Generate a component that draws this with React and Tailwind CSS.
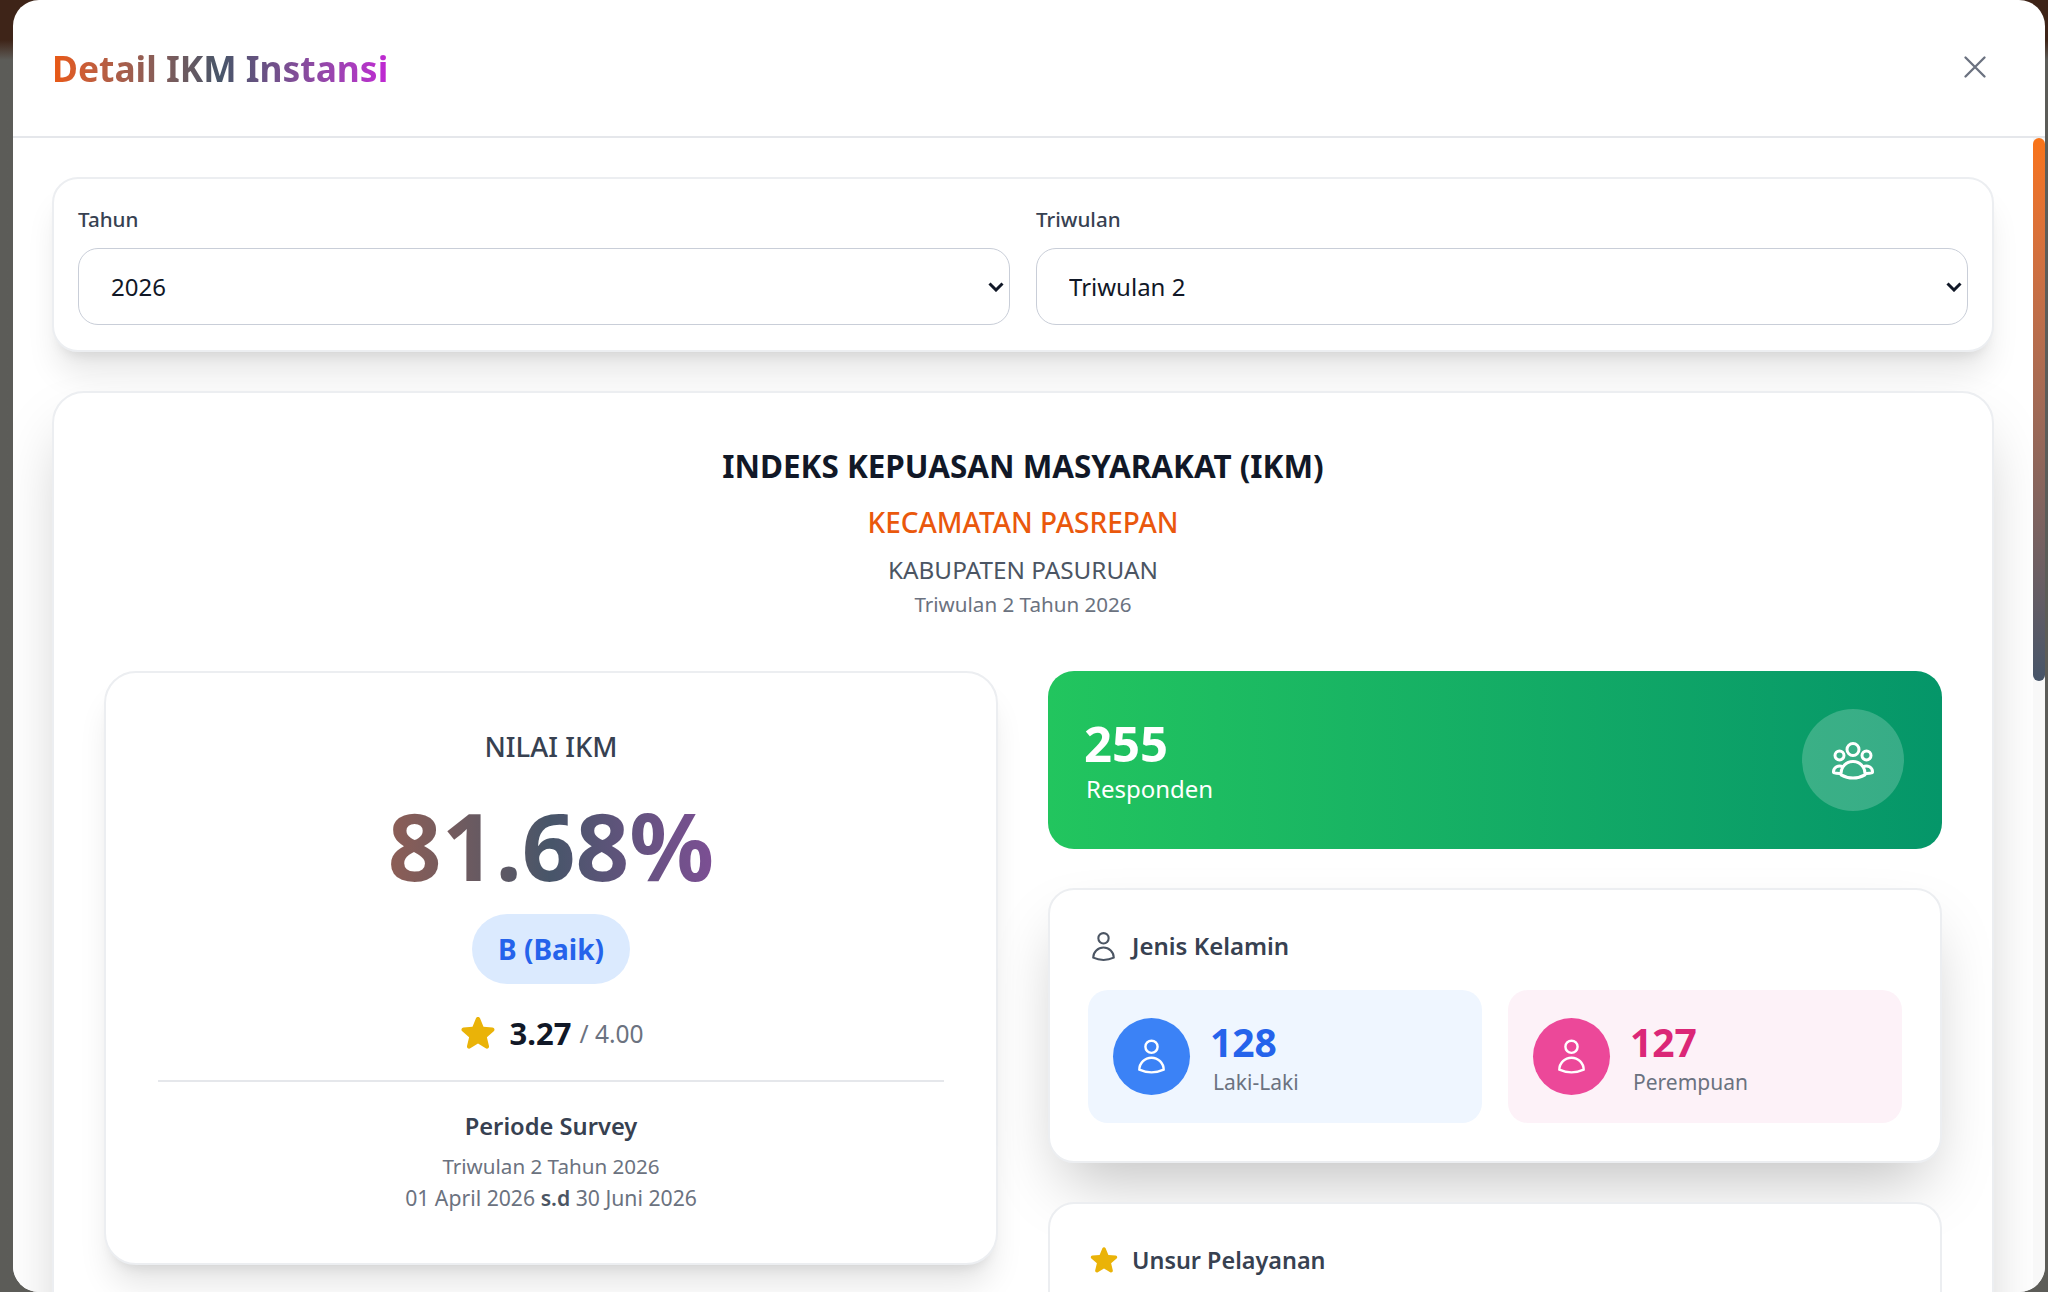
import React from 'react';
import { HiOutlineUser, HiOutlineUserGroup, HiOutlineXMark, HiStar } from 'react-icons/hi2';

function Filter({ label, value, options }) {
  return (
    <div>
      <label className="block text-[20.6px] leading-[26px] font-medium text-[#374151] mb-[16px]">{label}</label>
      <div className="relative">
        <select
          defaultValue={value}
          className="w-full h-[77px] appearance-none pl-[32px] pr-[30px] text-[24px] text-[#111827] bg-white border border-[#c9ced8] rounded-[20px]"
        >
          {options.map(o => <option key={o}>{o}</option>)}
        </select>
        <svg className="absolute right-[6px] top-[34px] w-[16px] h-[10px] pointer-events-none" viewBox="0 0 16 10" fill="none">
          <path d="M1.5 1.5 8 8l6.5-6.5" stroke="#111827" strokeWidth="3" />
        </svg>
      </div>
    </div>
  );
}

function GenderBox({ bg, circle, numColor, value, label }) {
  return (
    <div className={`h-[133px] rounded-[20px] flex items-center pl-[25px] gap-[20px] ${bg}`}>
      <div className={`w-[77px] h-[77px] rounded-full flex items-center justify-center text-white ${circle}`}>
        <HiOutlineUser size={39} />
      </div>
      <div className="pt-[4px]">
        <div className={`text-[39px] leading-[44px] font-bold ${numColor}`}>{value}</div>
        <div className="mt-[3px] text-[21px] leading-[30px] text-[#6b7280] pl-[3px]">{label}</div>
      </div>
    </div>
  );
}

export default function App() {
  return (
    <div className="h-[1292px] overflow-hidden pl-[13px] pr-[3px] bg-gradient-to-b from-[#3e2418] from-[40px] to-[#5c5c58] to-[60px] font-['Noto_Sans',sans-serif]">
      <div className="h-[1292px] bg-white rounded-[26px] overflow-hidden flex flex-col">
        {/* header */}
        <div className="h-[138px] shrink-0 border-b-2 border-[#e5e7eb] flex items-center justify-between pl-[39px] pr-[51px] pt-[2px]">
          <h2 className="text-[35.4px] font-bold bg-gradient-to-r from-[#ea580c] via-[#475569] to-[#c026d3] bg-clip-text text-transparent">Detail IKM Instansi</h2>
          <HiOutlineXMark size={38} className="text-[#6b7280] -mt-[5px]" />
        </div>

        <div className="flex flex-1 min-h-0">
          <div className="flex-1 min-w-0 overflow-hidden p-[39px] bg-white">
            {/* filter */}
            <div className="grid grid-cols-2 gap-[26px] h-[175px] px-[24px] pt-[27px] bg-white border-2 border-[#eceef1] rounded-[26px] shadow-[0_26px_32px_-6px_rgba(0,0,0,0.1),0_10px_13px_-8px_rgba(0,0,0,0.1)]">
              <Filter label="Tahun" value="2026" options={['2026', '2025']} />
              <Filter label="Triwulan" value="Triwulan 2" options={['Triwulan 1', 'Triwulan 2', 'Triwulan 3', 'Triwulan 4']} />
            </div>

            {/* ikm */}
            <div className="mt-[39px] bg-white border-2 border-[#eceef1] rounded-[32px] px-[50px] pt-[50px] pb-[50px] shadow-[0_32px_65px_-16px_rgba(0,0,0,0.25)]">
              <div className="text-center">
                <h3 className="text-[31.4px] leading-[46px] font-bold text-[#111827]">INDEKS KEPUASAN MASYARAKAT (IKM)</h3>
                <div className="mt-[15px] text-[28px] leading-[36px] font-medium text-[#ea580c]">KECAMATAN PASREPAN</div>
                <div className="mt-[12px] text-[24.3px] leading-[36px] text-[#4b5563]">KABUPATEN PASURUAN</div>
                <div className="text-[20.6px] leading-[32px] text-[#6b7280]">Triwulan 2 Tahun 2026</div>
              </div>

              <div className="mt-[51px] grid grid-cols-2 gap-[50px] items-start">
                <div className="h-[594px] border-2 border-[#eceef1] rounded-[32px] bg-white px-[52px] pt-[52px] text-center shadow-[0_26px_32px_-6px_rgba(0,0,0,0.1),0_10px_13px_-8px_rgba(0,0,0,0.1)]">
                  <div className="text-[27.5px] leading-[44px] font-medium text-[#374151]">NILAI IKM</div>
                  <div className="mt-[20px] text-[94px] leading-[112px] font-bold bg-gradient-to-r from-[#ea580c] via-[#475569] to-[#c026d3] bg-clip-text text-transparent">81.68%</div>
                  <div className="mt-[13px] inline-flex h-[70px] items-center px-[26px] rounded-full bg-[#dbeafe] text-[#2563eb] text-[28px] font-bold">B (Baik)</div>
                  <div className="mt-[26px] flex items-center justify-center gap-[8px]">
                    <HiStar size={40} className="text-[#eab308] mr-[3px]" />
                    <span className="text-[31px] font-bold text-[#111827]">3.27</span>
                    <span className="text-[24.5px] text-[#6b7280] mt-[2px]">/ 4.00</span>
                  </div>
                  <div className="mt-[23px] pt-[26px] border-t-2 border-[#e5e7eb]">
                    <div className="text-[23.7px] leading-[36px] font-semibold text-[#374151]">Periode Survey</div>
                    <div className="mt-[6px] text-[20.6px] leading-[32px] text-[#6b7280]">Triwulan 2 Tahun 2026</div>
                    <div className="text-[21.2px] leading-[32px] text-[#6b7280]">01 April 2026 <b className="font-semibold text-[#4b5563]">s.d</b> 30 Juni 2026</div>
                  </div>
                </div>

                <div className="flex flex-col gap-[39px]">
                  <div className="h-[178px] rounded-[26px] bg-gradient-to-r from-[#22c55e] to-[#059669] flex items-center justify-between pl-[36px] pr-[38px] text-white">
                    <div className="pt-[3px]">
                      <div className="text-[49px] leading-[54px] font-bold">255</div>
                      <div className="text-[24px] leading-[37px] pl-[2px]">Responden</div>
                    </div>
                    <div className="w-[102px] h-[102px] rounded-full bg-white/20 flex items-center justify-center">
                      <HiOutlineUserGroup size={48} />
                    </div>
                  </div>

                  <div className="h-[275px] rounded-[26px] border-2 border-[#eceef1] bg-white px-[38px] pt-[38px] shadow-[0_32px_65px_-16px_rgba(0,0,0,0.25)]">
                    <div className="flex items-center gap-[12px] text-[#374151] -ml-[1px]">
                      <HiOutlineUser size={33} className="text-[#4b5563]" />
                      <span className="text-[24px] leading-[36px] font-semibold">Jenis Kelamin</span>
                    </div>
                    <div className="mt-[26px] grid grid-cols-2 gap-[26px]">
                      <GenderBox bg="bg-[#eff6ff]" circle="bg-[#3b82f6]" numColor="text-[#2563eb]" value="128" label="Laki-Laki" />
                      <GenderBox bg="bg-[#fdf2f8]" circle="bg-[#ec4899]" numColor="text-[#db2777]" value="127" label="Perempuan" />
                    </div>
                  </div>

                  <div className="rounded-[26px] border-2 border-[#eceef1] bg-white px-[38px] pt-[38px] h-[200px]">
                    <div className="flex items-center gap-[12px] text-[#374151]">
                      <HiStar size={32} className="text-[#eab308]" />
                      <span className="text-[23.4px] leading-[36px] font-semibold">Unsur Pelayanan</span>
                    </div>
                  </div>
                </div>
              </div>
            </div>
          </div>

          {/* scrollbar */}
          <div className="w-[12px] shrink-0 bg-[#f8f8f8]">
            <div className="h-[543px] rounded-[6px] bg-gradient-to-b from-[#f97316] to-[#475569]"></div>
          </div>
        </div>
      </div>
    </div>
  );
}
